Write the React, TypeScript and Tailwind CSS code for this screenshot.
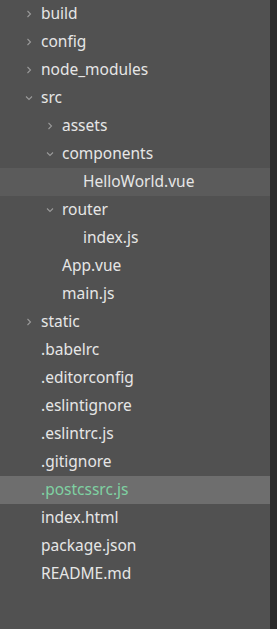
import React from 'react';

type Node = {
  name: string;
  depth: number;
  folder?: 'open' | 'closed';
  tone?: 'selected' | 'active';
};

const tree: Node[] = [
  { name: 'build', depth: 0, folder: 'closed' },
  { name: 'config', depth: 0, folder: 'closed' },
  { name: 'node_modules', depth: 0, folder: 'closed' },
  { name: 'src', depth: 0, folder: 'open' },
  { name: 'assets', depth: 1, folder: 'closed' },
  { name: 'components', depth: 1, folder: 'open' },
  { name: 'HelloWorld.vue', depth: 2, tone: 'selected' },
  { name: 'router', depth: 1, folder: 'open' },
  { name: 'index.js', depth: 2 },
  { name: 'App.vue', depth: 1 },
  { name: 'main.js', depth: 1 },
  { name: 'static', depth: 0, folder: 'closed' },
  { name: '.babelrc', depth: 0 },
  { name: '.editorconfig', depth: 0 },
  { name: '.eslintignore', depth: 0 },
  { name: '.eslintrc.js', depth: 0 },
  { name: '.gitignore', depth: 0 },
  { name: '.postcssrc.js', depth: 0, tone: 'active' },
  { name: 'index.html', depth: 0 },
  { name: 'package.json', depth: 0 },
  { name: 'README.md', depth: 0 },
];

const indents = ['pl-[41px]', 'pl-[62px]', 'pl-[83px]'];

function Chevron({ open }: { open: boolean }) {
  return (
    <svg
      width="8"
      height="8"
      viewBox="0 0 8 8"
      className="absolute -ml-[16px] text-[#9a9a9a]"
      fill="none"
      stroke="currentColor"
      strokeWidth="1.1"
    >
      {open ? <path d="M1 2.5 L4 5.5 L7 2.5" /> : <path d="M2.5 1 L5.5 4 L2.5 7" />}
    </svg>
  );
}

function Row({ node }: { node: Node }) {
  const bg =
    node.tone === 'active' ? 'bg-[#6e6e6e]' : node.tone === 'selected' ? 'bg-[#5b5b5b]' : '';
  const color = node.tone === 'active' ? 'text-[#7fd1a2]' : 'text-[#e6e6e6]';
  return (
    <div className={`h-[28px] flex items-center ${bg} ${indents[node.depth]}`}>
      <div className="relative flex items-center">
        {node.folder && <Chevron open={node.folder === 'open'} />}
        <span className={`${color} text-[15.5px] leading-none`}>{node.name}</span>
      </div>
    </div>
  );
}

export default function App() {
  return (
    <div
      className="flex w-[277px] h-[629px] bg-[#2b2b2b] overflow-hidden"
      style={{ fontFamily: '"Noto Sans", "Noto Sans CJK SC", sans-serif' }}
    >
      <div className="w-[270px] h-full bg-[#515151]">
        {tree.map((n) => (
          <Row key={n.name + n.depth} node={n} />
        ))}
      </div>
      <div className="flex-1 h-full bg-[#2d2d2d]" />
    </div>
  );
}
